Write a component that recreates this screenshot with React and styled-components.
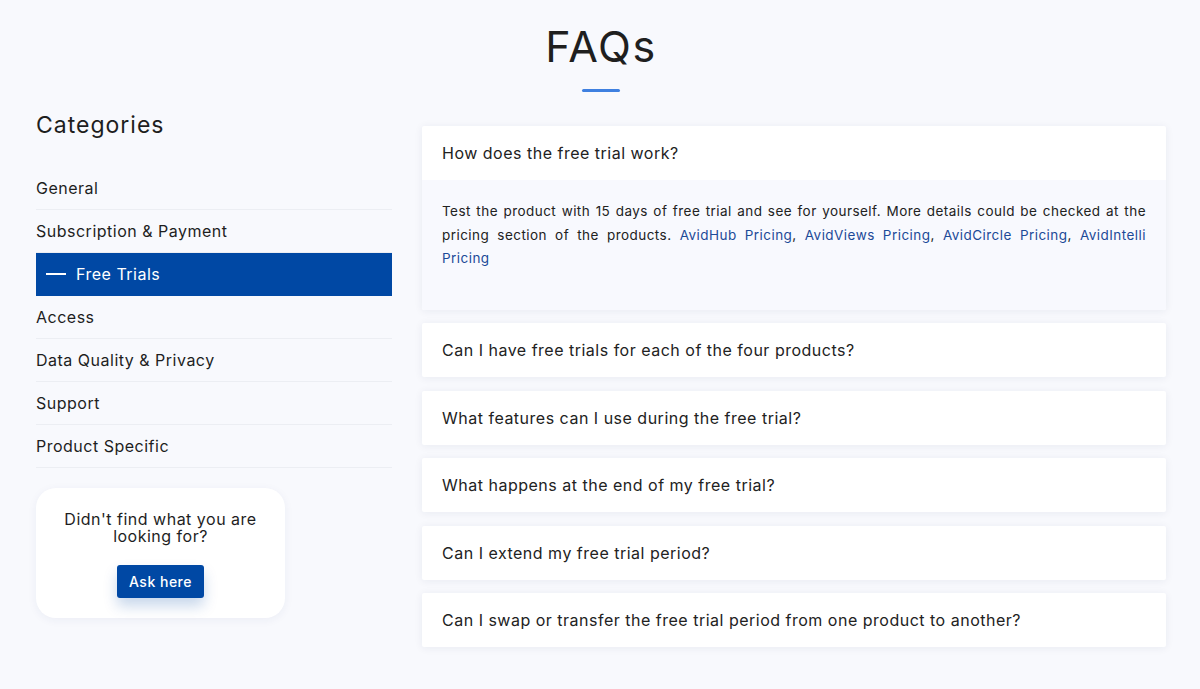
import styled, { createGlobalStyle } from 'styled-components';

const GlobalStyle = createGlobalStyle`
  * { box-sizing: border-box; }
  body {
    margin: 0;
    background: #f8f9fd;
    font-family: Inter, "Noto Sans", sans-serif;
    color: #1e1e1e;
    letter-spacing: 0.5px;
  }
`;

const Page = styled.div`
  padding: 22px 34px 40px 36px;
`;

const Title = styled.h1`
  margin: 0;
  text-align: center;
  font-size: 43px;
  font-weight: 400;
  line-height: 48px;
  letter-spacing: 1.5px;
  color: #1f1f1f;
`;

const TitleBar = styled.div`
  width: 38px;
  height: 3px;
  margin: 19px auto 0;
  background: #3f80e0;
  border-radius: 2px;
`;

const Columns = styled.div`
  display: grid;
  grid-template-columns: 356px 1fr;
  column-gap: 30px;
  margin-top: 12px;
`;

const Side = styled.aside`
  display: flex;
  flex-direction: column;
`;

const SideTitle = styled.h2`
  margin: 8px 0 29px;
  font-size: 23px;
  font-weight: 400;
  line-height: 26px;
  letter-spacing: 1px;
`;

const CategoryList = styled.ul`
  list-style: none;
  margin: 0;
  padding: 0;
`;

const Category = styled.li`
  display: flex;
  align-items: center;
  gap: 10px;
  height: 43px;
  padding: 0 ${p => (p.$active ? '10px' : '0')};
  font-size: 16px;
  color: ${p => (p.$active ? '#fff' : '#1e1e1e')};
  background: ${p => (p.$active ? '#0048a4' : 'transparent')};
  border-bottom: 1px solid ${p => (p.$active ? '#0048a4' : '#eceef3')};
`;

const Dash = styled.span`
  width: 20px;
  height: 2px;
  background: #fff;
`;

const HelpCard = styled.div`
  width: 249px;
  margin-top: 20px;
  padding: 23px 18px 20px;
  background: #fff;
  border-radius: 20px;
  box-shadow: 0 2px 10px rgba(30, 50, 120, 0.06);
  text-align: center;
`;

const HelpText = styled.p`
  margin: 0;
  font-size: 16px;
  line-height: 17px;
`;

const AskButton = styled.button`
  margin-top: 20px;
  padding: 0 12px;
  height: 33px;
  border: 0;
  border-radius: 3px;
  background: #0048a4;
  color: #fff;
  font-family: inherit;
  font-size: 14px;
  font-weight: 500;
  letter-spacing: 0.5px;
  box-shadow: 0 8px 14px rgba(0, 72, 164, 0.22);
`;

const Faqs = styled.div`
  display: flex;
  flex-direction: column;
  gap: 13.5px;
  margin-top: 22px;
`;

const Faq = styled.div`
  background: #fff;
  border-radius: 2px;
  box-shadow: 0 1px 8px rgba(30, 40, 90, 0.07);
  overflow: hidden;
`;

const Question = styled.div`
  height: 54px;
  display: flex;
  align-items: center;
  padding: 0 20px;
  font-size: 16px;
  color: #222;
`;

const Answer = styled.div`
  background: #f8f9fe;
  padding: 20px 20px 39px;
  font-size: 13.5px;
  line-height: 23.5px;
  letter-spacing: 0.45px;
  text-align: justify;
  color: #222;
`;

const Link = styled.a`
  color: #1d4a98;
  text-decoration: none;
`;

const categories = [
  'General',
  'Subscription & Payment',
  'Free Trials',
  'Access',
  'Data Quality & Privacy',
  'Support',
  'Product Specific',
];

const questions = [
  'Can I have free trials for each of the four products?',
  'What features can I use during the free trial?',
  'What happens at the end of my free trial?',
  'Can I extend my free trial period?',
  'Can I swap or transfer the free trial period from one product to another?',
];

export default function App() {
  return (
    <>
      <GlobalStyle />
      <Page>
        <Title>FAQs</Title>
        <TitleBar />
        <Columns>
          <Side>
            <SideTitle>Categories</SideTitle>
            <CategoryList>
              {categories.map(c => (
                <Category key={c} $active={c === 'Free Trials'}>
                  {c === 'Free Trials' && <Dash />}
                  {c}
                </Category>
              ))}
            </CategoryList>
            <HelpCard>
              <HelpText>Didn't find what you are looking for?</HelpText>
              <AskButton>Ask here</AskButton>
            </HelpCard>
          </Side>
          <Faqs>
            <Faq>
              <Question>How does the free trial work?</Question>
              <Answer>
                Test the product with 15 days of free trial and see for yourself. More details could be
                checked at the pricing section of the products.{' '}
                <Link href="#">AvidHub Pricing</Link>, <Link href="#">AvidViews Pricing</Link>,{' '}
                <Link href="#">AvidCircle Pricing</Link>, <Link href="#">AvidIntelli Pricing</Link>
              </Answer>
            </Faq>
            {questions.map(q => (
              <Faq key={q}>
                <Question>{q}</Question>
              </Faq>
            ))}
          </Faqs>
        </Columns>
      </Page>
    </>
  );
}
